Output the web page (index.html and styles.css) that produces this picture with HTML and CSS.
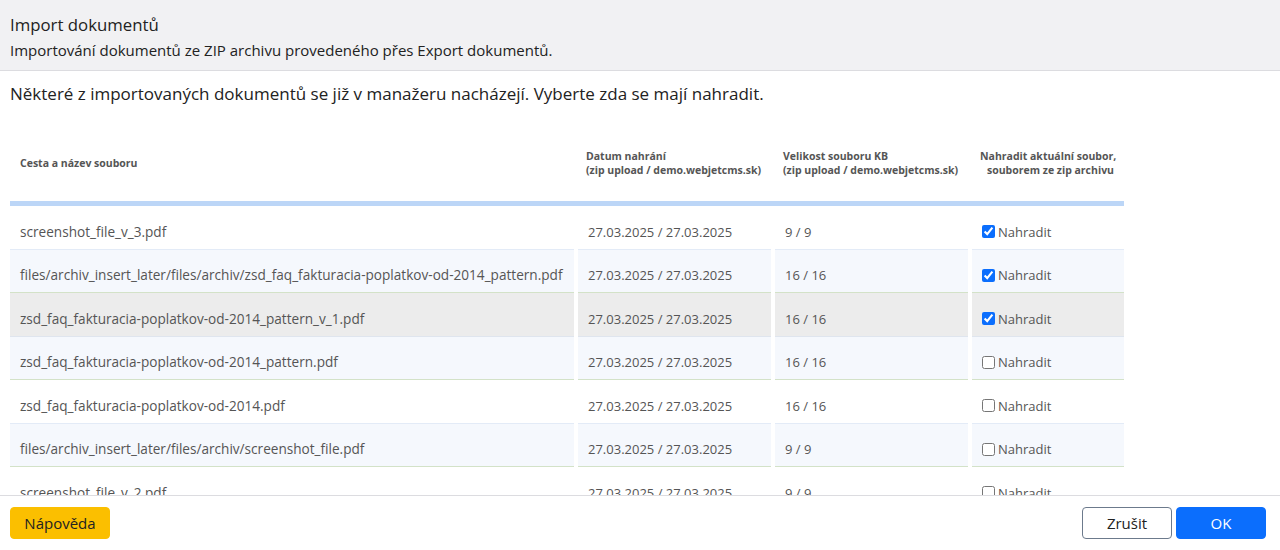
FILE: index.html
```html
<!DOCTYPE html>
<html lang="cs">
<head>
<meta charset="utf-8">
<title>Import dokumentů</title>
<link rel="stylesheet" href="styles.css">
</head>
<body>
<div class="dialog">
  <div class="modal-header">
    <div class="title">Import dokumentů</div>
    <div class="subtitle">Importování dokumentů ze ZIP archivu provedeného přes Export dokumentů.</div>
  </div>
  <div class="modal-body">
    <p class="lead">Některé z importovaných dokumentů se již v manažeru nacházejí. Vyberte zda se mají nahradit.</p>
    <div class="scroll-head">
      <table class="head-table">
        <colgroup><col class="hc1"><col class="hc2"><col class="hc3"><col class="hc4"></colgroup>
        <thead>
          <tr>
            <th>Cesta a název souboru</th>
            <th>Datum nahrání<br>(zip upload / demo.webjetcms.sk)</th>
            <th>Velikost souboru KB<br>(zip upload / demo.webjetcms.sk)</th>
            <th class="th-right">Nahradit aktuální soubor,<br>souborem ze zip archivu</th>
          </tr>
        </thead>
      </table>
    </div>
    <div class="scroll-body">
      <table class="body-table">
        <colgroup><col class="bc1"><col class="bc2"><col class="bc3"><col class="bc4"></colgroup>
        <tbody>
          <tr class="odd"><td class="name">screenshot_file_v_3.pdf</td><td>27.03.2025 / 27.03.2025</td><td>9 / 9</td><td><label class="chk"><input type="checkbox" checked>Nahradit</label></td></tr>
          <tr class="even"><td class="name">files/archiv_insert_later/files/archiv/zsd_faq_fakturacia-poplatkov-od-2014_pattern.pdf</td><td>27.03.2025 / 27.03.2025</td><td>16 / 16</td><td><label class="chk"><input type="checkbox" checked>Nahradit</label></td></tr>
          <tr class="odd hover"><td class="name">zsd_faq_fakturacia-poplatkov-od-2014_pattern_v_1.pdf</td><td>27.03.2025 / 27.03.2025</td><td>16 / 16</td><td><label class="chk"><input type="checkbox" checked>Nahradit</label></td></tr>
          <tr class="even"><td class="name">zsd_faq_fakturacia-poplatkov-od-2014_pattern.pdf</td><td>27.03.2025 / 27.03.2025</td><td>16 / 16</td><td><label class="chk"><input type="checkbox">Nahradit</label></td></tr>
          <tr class="odd"><td class="name">zsd_faq_fakturacia-poplatkov-od-2014.pdf</td><td>27.03.2025 / 27.03.2025</td><td>16 / 16</td><td><label class="chk"><input type="checkbox">Nahradit</label></td></tr>
          <tr class="even"><td class="name">files/archiv_insert_later/files/archiv/screenshot_file.pdf</td><td>27.03.2025 / 27.03.2025</td><td>9 / 9</td><td><label class="chk"><input type="checkbox">Nahradit</label></td></tr>
          <tr class="odd"><td class="name">screenshot_file_v_2.pdf</td><td>27.03.2025 / 27.03.2025</td><td>9 / 9</td><td><label class="chk"><input type="checkbox">Nahradit</label></td></tr>
        </tbody>
      </table>
    </div>
  </div>
  <div class="modal-footer">
    <button class="btn btn-help">Nápověda</button>
    <div class="right">
      <button class="btn btn-cancel">Zrušit</button>
      <button class="btn btn-ok">OK</button>
    </div>
  </div>
</div>
</body>
</html>
```

FILE: styles.css
```css
* { box-sizing: border-box; }
html, body { margin: 0; padding: 0; }
body {
  font-family: "Open Sans", "Noto Sans", sans-serif;
  color: #222;
  background: #fff;
}
.dialog {
  width: 1280px;
  height: 550px;
  display: flex;
  flex-direction: column;
  overflow: hidden;
}
.modal-header {
  height: 71px;
  background: #f1f1f3;
  border-bottom: 1px solid #dcdce0;
  padding: 14px 10px 0 10px;
  flex: none;
}
.title {
  font-size: 16.8px;
  line-height: 22px;
  color: #222;
}
.subtitle {
  font-size: 15px;
  line-height: 20px;
  margin-top: 4px;
  color: #222;
}
.modal-body {
  flex: 1;
  overflow: hidden;
  padding: 0 10px;
  min-height: 0;
}
.lead {
  margin: 11px 0 0 0;
  font-size: 17px;
  line-height: 24px;
  color: #222;
}
.scroll-head {
  width: 1114px;
  margin-top: 24px;
  border-bottom: 5px solid #bcd6f7;
}
table { border-collapse: separate; table-layout: fixed; }
.head-table { width: 1114px; border-spacing: 0; }
.hc1 { width: 566px; }
.hc2 { width: 197px; }
.hc3 { width: 197px; }
.hc4 { width: 154px; }
.head-table th {
  height: 71px;
  padding: 0 10px 6px 10px;
  text-align: left;
  font-size: 10.5px;
  line-height: 14px;
  font-weight: 700;
  color: #555;
  vertical-align: middle;
  white-space: nowrap;
}
.head-table th.th-right { text-align: right; }
.scroll-body { width: 1122px; margin-left: -4px; }
.body-table { width: 1122px; border-spacing: 4px 0; }
.bc1 { width: 564px; }
.bc2 { width: 193px; }
.bc3 { width: 193px; }
.bc4 { width: 152px; }
.body-table td {
  height: 43.5px;
  padding: 15.5px 10px 7px 10px;
  font-size: 13px;
  line-height: 20px;
  color: #555;
  white-space: nowrap;
  overflow: hidden;
  border-bottom: 1px solid #e3ebf7;
  vertical-align: top;
}
.body-table td.name { font-size: 13.6px; }
.body-table tr.even td { background: #f5f8fd; border-bottom-color: #d3e2c8; }
.body-table tr.hover td { background: #ececec; border-bottom-color: #dfe5ee; }
.chk {
  display: flex;
  align-items: center;
  height: 20px;
  gap: 3px;
  font-size: 13px;
  color: #555;
}
.chk input {
  margin: 0;
  width: 13px;
  height: 13px;
  accent-color: #0b6efd;
}
.modal-footer {
  flex: none;
  height: 55px;
  border-top: 1px solid #dcdce0;
  padding: 11px 14px 0 10px;
  display: flex;
  justify-content: space-between;
  align-items: flex-start;
}
.right { display: flex; gap: 4px; }
.btn {
  height: 32px;
  border-radius: 4px;
  font-family: "Open Sans", "Noto Sans", sans-serif;
  font-size: 15px;
  padding: 0;
  cursor: pointer;
}
.btn-help {
  width: 100px;
  background: #fbbf00;
  border: 1px solid #fbbf00;
  color: #222;
}
.btn-cancel {
  width: 90px;
  background: #fff;
  border: 1px solid #6c7a8c;
  color: #222;
}
.btn-ok {
  width: 90px;
  background: #0b6efd;
  border: 1px solid #0b6efd;
  color: #fff;
}
```
